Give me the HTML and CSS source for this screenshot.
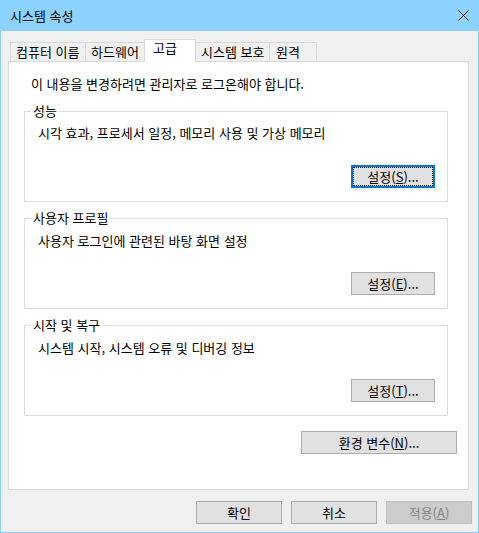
FILE: index.html
```html
<!DOCTYPE html>
<html lang="ko">
<head>
<meta charset="utf-8">
<title>시스템 속성</title>
<link rel="stylesheet" href="styles.css">
</head>
<body>
<div class="window">
  <div class="titlebar">
    <span class="title">시스템 속성</span>
    <span class="close">
      <svg width="11" height="11" viewBox="0 0 11 11"><path d="M0.5 0.5 L10.5 10.5 M10.5 0.5 L0.5 10.5" stroke="#000" stroke-width="1" fill="none"/></svg>
    </span>
  </div>
  <div class="client">
    <div class="tabs">
      <div class="tab tab-name">컴퓨터 이름</div>
      <div class="tab tab-hw">하드웨어</div>
      <div class="tab selected">고급</div>
      <div class="tab tab-prot">시스템 보호</div>
      <div class="tab tab-remote">원격</div>
    </div>
    <div class="panel">
      <p class="note">이 내용을 변경하려면 관리자로 로그온해야 합니다.</p>
      <fieldset class="group">
        <legend>성능</legend>
        <p class="desc first">시각 효과, 프로세서 일정, 메모리 사용 및 가상 메모리</p>
        <div class="actions"><button class="btn focused">설정(<u>S</u>)...</button></div>
      </fieldset>
      <fieldset class="group">
        <legend>사용자 프로필</legend>
        <p class="desc">사용자 로그인에 관련된 바탕 화면 설정</p>
        <div class="actions"><button class="btn">설정(<u>E</u>)...</button></div>
      </fieldset>
      <fieldset class="group">
        <legend>시작 및 복구</legend>
        <p class="desc">시스템 시작, 시스템 오류 및 디버깅 정보</p>
        <div class="actions"><button class="btn">설정(<u>T</u>)...</button></div>
      </fieldset>
      <div class="env-row"><button class="btn wide">환경 변수(<u>N</u>)...</button></div>
    </div>
    <div class="footer">
      <button class="btn dlg">확인</button>
      <button class="btn dlg">취소</button>
      <button class="btn dlg" disabled>적용(<u>A</u>)</button>
    </div>
  </div>
</div>
</body>
</html>
```
FILE: styles.css
```css
* { box-sizing: border-box; }
html, body { margin: 0; padding: 0; background: #f0f0f0; }
body {
  font-family: "Noto Sans CJK KR", "Noto Sans", sans-serif;
  font-size: 13px;
  line-height: 16px;
  color: #000;
}
.window {
  width: 479px;
  height: 533px;
  border: 1px solid #8cd2ff;
  border-top: 0;
  background: #f0f0f0;
  display: flex;
  flex-direction: column;
}
.titlebar {
  height: 31px;
  background: #8cd2ff;
  display: flex;
  align-items: center;
  justify-content: space-between;
  padding: 0 9px 0 9px;
}
.close { display: flex; align-items: center; }
.close svg { display: block; }
.client { flex: 1; display: flex; flex-direction: column; }
.tabs {
  display: flex;
  align-items: flex-end;
  padding-top: 8px;
  margin-left: 9px;
}
.tab {
  height: 19px;
  padding: 1px 0 0 5px;
  border: 1px solid #d9d9d9;
  border-bottom: 0;
  background: #f0f0f0;
  white-space: nowrap;
  margin-left: -1px;
}
.tab:first-child { margin-left: 0; }
.tab-name { width: 76px; }
.tab-hw { width: 60px; }
.tab-prot { width: 75px; }
.tab-remote { width: 48px; padding-left: 6px; }
.tab.selected {
  height: 23px;
  width: 52px;
  padding: 0 0 0 8px;
  background: #fff;
  margin-bottom: -1px;
  position: relative;
  z-index: 1;
}
.panel {
  margin-left: 7px;
  width: 461px;
  height: 429px;
  background: #fff;
  border: 1px solid #d9d9d9;
  padding: 14px 20px 0 15px;
}
.note { margin: 0 0 11px 7px; }
.group {
  margin: 0 0 8px 0;
  padding: 0 12px 13px 13px;
  border: 1px solid #dcdcdc;
  min-width: 0;
}
.group legend {
  padding: 0 2px;
  margin-left: -7px;
}
.desc { margin: 7px 0 23px 0; }
.desc.first { margin-top: 6px; margin-bottom: 24px; }
.actions { display: flex; justify-content: flex-end; }
.btn {
  font: inherit;
  color: #000;
  height: 23px;
  width: 84px;
  padding: 0;
  background: #e1e1e1;
  border: 1px solid #adadad;
  border-radius: 0;
  line-height: 16px;
}
.btn u { text-underline-offset: 1px; }
.btn.focused {
  border: 2px solid #0078d7;
  outline: 1px dotted #000;
  outline-offset: -3px;
}
.env-row {
  display: flex;
  justify-content: flex-end;
  margin-top: 15px;
  margin-right: -9px;
}
.btn.wide { width: 156px; }
.footer {
  display: flex;
  justify-content: flex-end;
  gap: 9px;
  margin-top: 11px;
  padding-right: 6px;
}
.btn.dlg { width: 86px; }
.btn[disabled] {
  background: #cccccc;
  border-color: #bfbfbf;
  color: #838383;
}
```
